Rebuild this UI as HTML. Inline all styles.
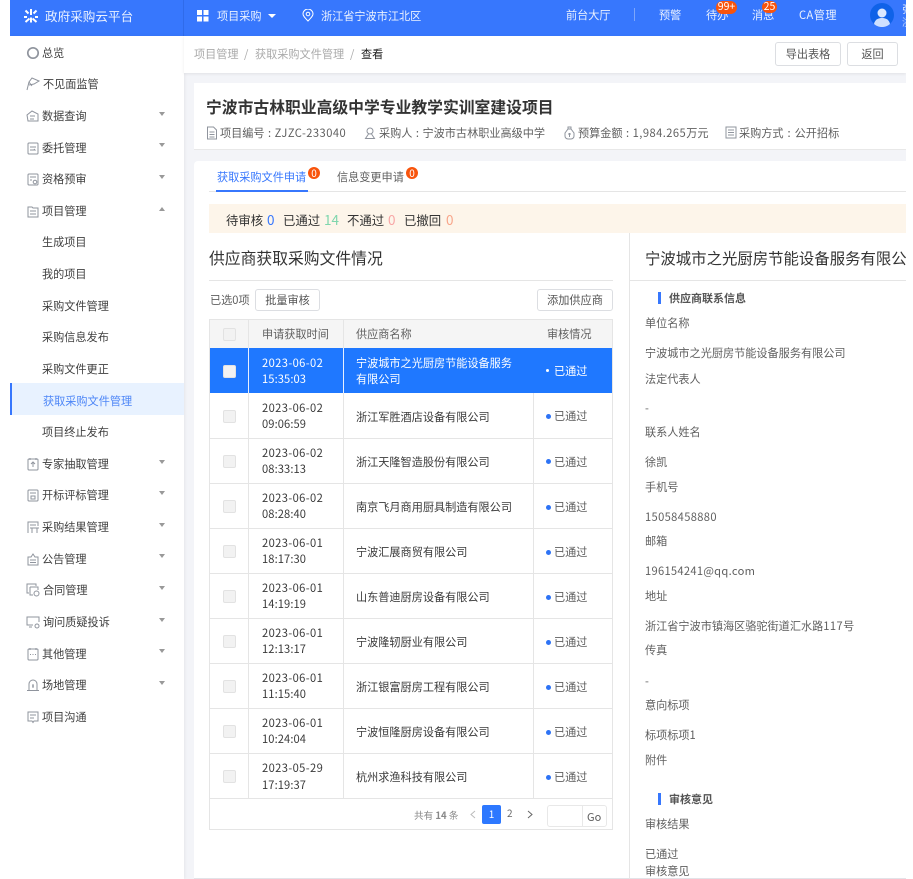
<!DOCTYPE html>
<html lang="zh"><head><meta charset="utf-8"><title>政府采购云平台</title>
<style>
*{box-sizing:border-box}
html,body{margin:0;padding:0;background:#fff}
body{width:913px;height:879px;position:relative;overflow:hidden;font-family:"Noto Sans CJK SC","Liberation Sans",sans-serif;font-size:11.15px;color:#333}
.a{position:absolute;white-space:nowrap}
#root{position:absolute;left:10px;top:0;width:896px;height:879px;background:#f3f4f8;overflow:hidden;filter:blur(.25px)}
#root .a{line-height:16px}
.top{position:absolute;left:0;top:0;width:896px;height:36px;background:#3777fd}
.w{color:#eaf1ff}
.badge{position:absolute;background:#f8540c;color:#fff;border-radius:8px;height:13px;line-height:12px!important;text-align:center;font-size:10.5px}
.side{position:absolute;left:0;top:36px;width:174px;height:843px;background:#fff;box-shadow:1px 0 3px rgba(0,0,0,.06)}
.m{color:#3f3f3f}
.car{position:absolute;width:0;height:0;border-left:3.5px solid transparent;border-right:3.5px solid transparent;border-top:4px solid #999}
.car.u{border-top:0;border-bottom:4px solid #999}
svg.i{position:absolute;width:14px;height:14px;fill:none;stroke:#8f949d;stroke-width:1}
.btn{position:absolute;background:#fff;border:1px solid #dcdee2;border-radius:3px;text-align:center;color:#555;line-height:22px}
.line{position:absolute;background:#e5e5e5}
.d{position:absolute;width:5px;height:5px;border-radius:50%;background:#2d73f5}
.cb{position:absolute;width:13px;height:13px;background:#f2f2f2;border:1px solid #e2e2e2;border-radius:2px}
.g{color:#5f5f5f}
.t{color:#3a3a3a}
.dt{letter-spacing:.4px}
.tm{letter-spacing:.1px}
.n{letter-spacing:.45px}
.c{margin:0 1px}
.s{font-size:13.5px;margin-left:1px}
</style></head><body>
<div id="root">
 <div class="top"></div>
 <div style="position:absolute;left:173px;top:0;width:1px;height:36px;background:#2f6bea"></div>
 <svg style="position:absolute;left:14px;top:9px;width:14px;height:14px" viewBox="0 0 14 14" fill="none" stroke="#fff" stroke-width="2"><path d="M7 0v6M1.500 1.500l3 3M12.500 1.500l-3 3M0 8h3M11 8h3M7 8.500v5M5.500 9.500l-4 3.500M8.500 9.500l4 3.500"/></svg>
 <div class="a w" style="left:35px;top:8px;font-size:12.6px">政府采购云平台</div>
 <svg style="position:absolute;left:187px;top:10px;width:12px;height:12px" viewBox="0 0 12 12" fill="#fff"><rect width="5" height="5"/><rect x="6.500" width="5" height="5"/><rect y="6.500" width="5" height="5"/><rect x="6.500" y="6.500" width="5" height="5"/></svg>
 <div class="a w" style="left:207px;top:8px">项目采购</div>
 <div class="car" style="left:258px;top:14px;border-left-width:4px;border-right-width:4px;border-top:4px solid #fff"></div>
 <svg style="position:absolute;left:292px;top:9px;width:12px;height:13px" viewBox="0 0 12 13" fill="none" stroke="#fff"><path d="M6 12C3 9 1 7 1 5a5 5 0 0 1 10 0c0 2-2 4-5 7z"/><circle cx="6" cy="5" r="1.800"/></svg>
 <div class="a w" style="left:311px;top:8px">浙江省宁波市江北区</div>
 <div class="a w" style="left:556px;top:7px">前台大厅</div>
 <div style="position:absolute;left:624px;top:8px;width:1px;height:13px;background:#7da6fb"></div>
 <div class="a w" style="left:649px;top:7px">预警</div>
 <div class="a w" style="left:696px;top:7px">待办</div>
 <div class="badge" style="left:706px;top:1px;width:21px">99+</div>
 <div class="a w" style="left:742px;top:7px">消息</div>
 <div class="badge" style="left:752px;top:1px;width:15px;height:12px">25</div>
 <div class="a w n" style="left:789px;top:7px">CA管理</div>
 <svg style="position:absolute;left:860px;top:3px;width:24px;height:24px" viewBox="0 0 24 24"><circle cx="12" cy="12" r="12" fill="#0f62e8"/><circle cx="12" cy="10" r="4.500" fill="#dbe8ff"/><path d="M4 21c1-5 5-6 8-6s7 1 8 6a12 12 0 0 1-16 0z" fill="#cfe0ff"/></svg>
 <div class="a w" style="left:892px;top:1px;font-size:10px">张</div>
 <div class="a w" style="left:892px;top:14px;font-size:10px;opacity:.7">浙</div>

 <div class="side"></div>
 <div class="a m" style="left:32px;top:45px">总览</div>
 <svg class="i" style="left:16px;top:46px" viewBox="0 0 14 14"><circle cx="7" cy="7" r="5.200" stroke-width="1.700"/></svg>
 <div class="a m" style="left:33px;top:76px">不见面监管</div>
 <svg class="i" style="left:16px;top:77px" viewBox="0 0 14 14"><path d="M1 13l2-8 3-4 7 3-5 3-5 1M3 5l3 4"/></svg>
 <div class="a m" style="left:32px;top:108px">数据查询</div>
 <svg class="i" style="left:16px;top:109px" viewBox="0 0 14 14"><path d="M1 6l5-4 6 3v7H2zM4 7h5M4 10h4"/></svg>
 <div class="car" style="left:149px;top:112px"></div>
 <div class="a m" style="left:32px;top:140px">委托管理</div>
 <svg class="i" style="left:16px;top:141px" viewBox="0 0 14 14"><rect x="2" y="2" width="10" height="11" rx="1"/><path d="M4 6h6M4 9h5l-1-1"/></svg>
 <div class="car" style="left:149px;top:143px"></div>
 <div class="a m" style="left:32px;top:171px">资格预审</div>
 <svg class="i" style="left:16px;top:172px" viewBox="0 0 14 14"><rect x="2" y="2" width="10" height="11" rx="1"/><path d="M4 5h6M4 8h2"/><circle cx="9" cy="10" r="1.800"/></svg>
 <div class="car" style="left:149px;top:175px"></div>
 <div class="a m" style="left:32px;top:203px">项目管理</div>
 <svg class="i" style="left:16px;top:204px" viewBox="0 0 14 14"><path d="M2 3h4l1 1h5v9H2zM4 7h6M4 10h6"/></svg>
 <div class="car u" style="left:149px;top:207px"></div>
 <div class="a m" style="left:32px;top:234px">生成项目</div>
 <div class="a m" style="left:32px;top:266px">我的项目</div>
 <div class="a m" style="left:32px;top:298px">采购文件管理</div>
 <div class="a m" style="left:32px;top:329px">采购信息发布</div>
 <div class="a m" style="left:32px;top:361px">采购文件更正</div>
 <div style="position:absolute;left:0;top:383px;width:174px;height:32px;background:#e8f2ff;border-left:2px solid #3777fd"></div>
 <div class="a" style="left:33px;top:393px;color:#4d86f7">获取采购文件管理</div>
 <div class="a m" style="left:32px;top:424px">项目终止发布</div>
 <div class="a m" style="left:32px;top:456px">专家抽取管理</div>
 <svg class="i" style="left:16px;top:457px" viewBox="0 0 14 14"><rect x="2" y="2" width="10" height="11" rx="1"/><path d="M7 10V5M5 7l2-2 2 2M4 1v2M10 1v2"/></svg>
 <div class="car" style="left:149px;top:460px"></div>
 <div class="a m" style="left:32px;top:487px">开标评标管理</div>
 <svg class="i" style="left:16px;top:488px" viewBox="0 0 14 14"><rect x="2" y="2" width="10" height="11" rx="1"/><path d="M4 5h6M5 8h4v3H5z"/></svg>
 <div class="car" style="left:149px;top:491px"></div>
 <div class="a m" style="left:32px;top:519px">采购结果管理</div>
 <svg class="i" style="left:16px;top:520px" viewBox="0 0 14 14"><path d="M2 13V2h10v4M4 5h6M4 8h9M6 8v5M11 8v5"/></svg>
 <div class="car" style="left:149px;top:523px"></div>
 <div class="a m" style="left:32px;top:551px">公告管理</div>
 <svg class="i" style="left:16px;top:552px" viewBox="0 0 14 14"><path d="M2 13V5h3l2-3 2 3h3v8zM4 8h6M4 10.500h6"/></svg>
 <div class="car" style="left:149px;top:554px"></div>
 <div class="a m" style="left:33px;top:582px">合同管理</div>
 <svg class="i" style="left:16px;top:583px" viewBox="0 0 14 14"><path d="M3 10H1V1h9v2M4 4h8v3M4 4v8h3"/><circle cx="10.500" cy="10.500" r="2.500"/></svg>
 <div class="car" style="left:149px;top:586px"></div>
 <div class="a m" style="left:33px;top:614px">询问质疑投诉</div>
 <svg class="i" style="left:16px;top:615px" viewBox="0 0 14 14"><path d="M7 10H1V2h12v5M3 12h3"/><circle cx="11" cy="11" r="2"/></svg>
 <div class="car" style="left:149px;top:618px"></div>
 <div class="a m" style="left:32px;top:646px">其他管理</div>
 <svg class="i" style="left:16px;top:647px" viewBox="0 0 14 14"><rect x="2" y="2" width="10" height="11" rx="1"/><path d="M4 7.500h1M6.500 7.500h1M9 7.500h1M4 1v2M10 1v2"/></svg>
 <div class="car" style="left:149px;top:649px"></div>
 <div class="a m" style="left:32px;top:677px">场地管理</div>
 <svg class="i" style="left:16px;top:678px" viewBox="0 0 14 14"><path d="M3 12V6a4 4 0 0 1 8 0v6M1 12.500h12M7 6v4M6 8h2"/></svg>
 <div class="car" style="left:149px;top:681px"></div>
 <div class="a m" style="left:32px;top:709px">项目沟通</div>
 <svg class="i" style="left:16px;top:710px" viewBox="0 0 14 14"><path d="M2 2h10v9H8l-1 1.500L6 11H2zM4 5h6M4 8h4"/></svg>

 <div style="position:absolute;left:174px;top:36px;width:722px;height:37px;background:#fff;box-shadow:0 1px 3px rgba(0,0,0,.08)"></div>
 <div class="a" style="left:184px;top:46px;color:#aaa">项目管理</div>
 <div class="a" style="left:234px;top:46px;color:#aaa">/</div>
 <div class="a" style="left:245px;top:46px;color:#aaa">获取采购文件管理</div>
 <div class="a" style="left:340px;top:46px;color:#aaa">/</div>
 <div class="a" style="left:351px;top:46px;color:#222">查看</div>
 <div class="btn" style="left:765px;top:42px;width:66px;height:24px">导出表格</div>
 <div class="btn" style="left:837px;top:42px;width:51px;height:24px">返回</div>

 <div style="position:absolute;left:184px;top:83px;width:712px;height:67px;background:#fff;border-bottom:1px solid #e8e8e8"></div>
 <div class="a" style="left:196px;top:97px;font-size:15.8px;font-weight:bold;color:#333;line-height:20px">宁波市古林职业高级中学专业教学实训室建设项目</div>
 <svg class="i" style="left:196px;top:126px;width:12px;height:14px" viewBox="0 0 12 14"><path d="M1.500 1h6l3 3v9h-9zM3.500 6h5M3.500 8.500h5M3.500 11h5"/></svg>
 <div class="a g" style="left:210px;top:125px">项目编号<span class="c"> : </span><span class="n">ZJZC-233040</span></div>
 <svg class="i" style="left:354px;top:126px;width:12px;height:14px" viewBox="0 0 12 14"><circle cx="6" cy="5" r="3"/><path d="M4.500 8L1.500 12.500h9L7.500 8"/></svg>
 <div class="a g" style="left:369px;top:125px">采购人<span class="c"> : </span>宁波市古林职业高级中学</div>
 <svg class="i" style="left:553px;top:126px;width:13px;height:14px" viewBox="0 0 13 14"><path d="M5 3h3l3 4v3a3 3 0 0 1-3 3H5a3 3 0 0 1-3-3V7zM5 1h3v2H5zM5 8h3M6.500 7v4"/></svg>
 <div class="a g" style="left:568px;top:125px">预算金额<span class="c"> : </span><span class="n">1,984.265</span>万元</div>
 <svg class="i" style="left:715px;top:126px;width:12px;height:13px" viewBox="0 0 12 13"><rect x="1" y="1" width="10" height="11"/><path d="M3 4h6M3 6.500h6M3 9h6"/></svg>
 <div class="a g" style="left:729px;top:125px">采购方式<span class="c" style="margin:0 1.500px"> : </span>公开招标</div>

 <div style="position:absolute;left:184px;top:161px;width:712px;height:718px;background:#fff;border-radius:4px 0 0 0;border-bottom:1px solid #e2e3e8"></div>
 <div class="a" style="left:207px;top:169px;color:#3777fd">获取采购文件申请</div>
 <div class="badge" style="left:298px;top:167px;width:12px;height:12px;border-radius:7px;font-size:10px">0</div>
 <div class="a g" style="left:327px;top:169px">信息变更申请</div>
 <div class="badge" style="left:396px;top:167px;width:12px;height:12px;border-radius:7px;font-size:10px">0</div>
 <div class="line" style="left:199px;top:191px;width:697px;height:1px"></div>
 <div style="position:absolute;left:206px;top:190px;width:92px;height:2px;background:#3777fd"></div>
 <div style="position:absolute;left:199px;top:204px;width:697px;height:29px;background:#fdf5ea"></div>
 <div class="a" style="left:216px;top:211px;font-size:12.4px;color:#333">待审核 <span class="s" style="color:#3777fd">0</span></div>
 <div class="a" style="left:273px;top:211px;font-size:12.4px;color:#333">已通过 <span class="s" style="color:#7fd6ad">14</span></div>
 <div class="a" style="left:337px;top:211px;font-size:12.4px;color:#333">不通过 <span class="s" style="color:#f8a6a6">0</span></div>
 <div class="a" style="left:394px;top:211px;font-size:12.4px;color:#333">已撤回 <span class="s" style="color:#f8a58a;margin-left:2px">0</span></div>
 <div class="line" style="left:619px;top:233px;width:1px;height:646px"></div>

 <div class="a" style="left:199px;top:249px;font-size:15.8px;color:#333;line-height:18px">供应商获取采购文件情况</div>
 <div class="line" style="left:199px;top:280px;width:404px;height:1px"></div>
 <div class="a g" style="left:200px;top:292px">已选0项</div>
 <div class="btn" style="left:245px;top:289px;width:65px;height:22px;line-height:20px">批量审核</div>
 <div class="btn" style="left:527px;top:289px;width:76px;height:22px;line-height:20px">添加供应商</div>

 <div style="position:absolute;left:199px;top:319px;width:404px;height:30px;background:#f5f5f5"></div>
 <div style="position:absolute;left:199px;top:348px;width:404px;height:45px;background:#1f78ff"></div>
 <div style="position:absolute;left:199px;top:319px;width:404px;height:511px;border:1px solid #e5e5e5"></div>
 <div class="line" style="left:238px;top:319px;width:1px;height:480px"></div>
 <div class="line" style="left:333px;top:319px;width:1px;height:480px"></div>
 <div style="position:absolute;left:238px;top:348px;width:1px;height:45px;background:#e8f0ff"></div>
 <div style="position:absolute;left:333px;top:348px;width:1px;height:45px;background:#e8f0ff"></div>
 <div class="line" style="left:523px;top:393px;width:1px;height:406px"></div>
 <div class="line" style="left:199px;top:438px;width:404px;height:1px"></div>
 <div class="line" style="left:199px;top:483px;width:404px;height:1px"></div>
 <div class="line" style="left:199px;top:528px;width:404px;height:1px"></div>
 <div class="line" style="left:199px;top:573px;width:404px;height:1px"></div>
 <div class="line" style="left:199px;top:618px;width:404px;height:1px"></div>
 <div class="line" style="left:199px;top:663px;width:404px;height:1px"></div>
 <div class="line" style="left:199px;top:708px;width:404px;height:1px"></div>
 <div class="line" style="left:199px;top:753px;width:404px;height:1px"></div>
 <div class="line" style="left:199px;top:798px;width:404px;height:1px"></div>

 <div class="cb" style="left:213px;top:328px"></div>
 <div class="a g" style="left:252px;top:326px">申请获取时间</div>
 <div class="a g" style="left:346px;top:326px">供应商名称</div>
 <div class="a g" style="left:537px;top:326px">审核情况</div>

 <div class="cb" style="left:213px;top:365px"></div>
 <div class="a dt" style="left:252px;top:355px;color:#fff">2023-06-02</div>
 <div class="a tm" style="left:252px;top:371px;color:#fff">15:35:03</div>
 <div class="a" style="left:346px;top:355px;color:#fff">宁波城市之光厨房节能设备服务</div>
 <div class="a" style="left:346px;top:371px;color:#fff">有限公司</div>
 <div class="d" style="left:536px;top:369px;width:3px;height:3px;background:#fff"></div>
 <div class="a" style="left:544px;top:363px;color:#fff">已通过</div>

 <div class="cb" style="left:213px;top:410px"></div>
 <div class="a t dt" style="left:252px;top:400px">2023-06-02</div><div class="a t tm" style="left:252px;top:416px">09:06:59</div>
 <div class="a t" style="left:346px;top:409px">浙江军胜酒店设备有限公司</div>
 <div class="d" style="left:536px;top:414px"></div><div class="a g" style="left:544px;top:408px">已通过</div>

 <div class="cb" style="left:213px;top:455px"></div>
 <div class="a t dt" style="left:252px;top:445px">2023-06-02</div><div class="a t tm" style="left:252px;top:461px">08:33:13</div>
 <div class="a t" style="left:346px;top:454px">浙江天隆智造股份有限公司</div>
 <div class="d" style="left:536px;top:459px"></div><div class="a g" style="left:544px;top:454px">已通过</div>

 <div class="cb" style="left:213px;top:500px"></div>
 <div class="a t dt" style="left:252px;top:490px">2023-06-02</div><div class="a t tm" style="left:252px;top:506px">08:28:40</div>
 <div class="a t" style="left:346px;top:499px">南京飞月商用厨具制造有限公司</div>
 <div class="d" style="left:536px;top:505px"></div><div class="a g" style="left:544px;top:499px">已通过</div>

 <div class="cb" style="left:213px;top:545px"></div>
 <div class="a t dt" style="left:252px;top:535px">2023-06-01</div><div class="a t tm" style="left:252px;top:551px">18:17:30</div>
 <div class="a t" style="left:346px;top:544px">宁波汇展商贸有限公司</div>
 <div class="d" style="left:536px;top:550px"></div><div class="a g" style="left:544px;top:544px">已通过</div>

 <div class="cb" style="left:213px;top:590px"></div>
 <div class="a t dt" style="left:252px;top:580px">2023-06-01</div><div class="a t tm" style="left:252px;top:596px">14:19:19</div>
 <div class="a t" style="left:346px;top:589px">山东普迪厨房设备有限公司</div>
 <div class="d" style="left:536px;top:595px"></div><div class="a g" style="left:544px;top:589px">已通过</div>

 <div class="cb" style="left:213px;top:635px"></div>
 <div class="a t dt" style="left:252px;top:625px">2023-06-01</div><div class="a t tm" style="left:252px;top:641px">12:13:17</div>
 <div class="a t" style="left:346px;top:634px">宁波隆轫厨业有限公司</div>
 <div class="d" style="left:536px;top:640px"></div><div class="a g" style="left:544px;top:634px">已通过</div>

 <div class="cb" style="left:213px;top:680px"></div>
 <div class="a t dt" style="left:252px;top:670px">2023-06-01</div><div class="a t tm" style="left:252px;top:686px">11:15:40</div>
 <div class="a t" style="left:346px;top:679px">浙江银富厨房工程有限公司</div>
 <div class="d" style="left:536px;top:685px"></div><div class="a g" style="left:544px;top:679px">已通过</div>

 <div class="cb" style="left:213px;top:725px"></div>
 <div class="a t dt" style="left:252px;top:715px">2023-06-01</div><div class="a t tm" style="left:252px;top:731px">10:24:04</div>
 <div class="a t" style="left:346px;top:724px">宁波恒隆厨房设备有限公司</div>
 <div class="d" style="left:536px;top:730px"></div><div class="a g" style="left:544px;top:724px">已通过</div>

 <div class="cb" style="left:213px;top:770px"></div>
 <div class="a t dt" style="left:252px;top:760px">2023-05-29</div><div class="a t tm" style="left:252px;top:777px">17:19:37</div>
 <div class="a t" style="left:346px;top:769px">杭州求渔科技有限公司</div>
 <div class="d" style="left:536px;top:775px"></div><div class="a g" style="left:544px;top:769px">已通过</div>

 <div class="a" style="left:404px;top:807px;font-size:9.6px;color:#888">共有 <b>14</b> 条</div>
 <svg style="position:absolute;left:459px;top:810px;width:8px;height:9px" viewBox="0 0 8 9" fill="none" stroke="#bbb"><path d="M6 1L2 4.500 6 8"/></svg>
 <div style="position:absolute;left:472px;top:805px;width:19px;height:19px;background:#2d78ff;border-radius:2px;color:#fff;font-size:10px;line-height:18px;text-align:center">1</div>
 <div class="a" style="left:497px;top:805px;font-size:10px;color:#666">2</div>
 <svg style="position:absolute;left:516px;top:810px;width:8px;height:9px" viewBox="0 0 8 9" fill="none" stroke="#666"><path d="M2 1l4 3.500L2 8"/></svg>
 <div style="position:absolute;left:537px;top:805px;width:60px;height:22px;border:1px solid #e8e8e8;border-radius:3px"></div>
 <div style="position:absolute;left:572px;top:806px;width:1px;height:20px;background:#e8e8e8"></div>
 <div class="a g" style="left:577px;top:809px;font-size:11px">Go</div>

 <div class="a" style="left:635px;top:248px;font-size:15.4px;color:#333;line-height:20px">宁波城市之光厨房节能设备服务有限公司</div>
 <div class="line" style="left:620px;top:280px;width:276px;height:1px"></div>
 <div style="position:absolute;left:648px;top:292px;width:3px;height:12px;background:#3777fd"></div>
 <div class="a" style="left:659px;top:290px;font-size:11px;font-weight:bold;color:#555">供应商联系信息</div>
 <div class="a g" style="left:635px;top:315px">单位名称</div>
 <div class="a g" style="left:635px;top:345px">宁波城市之光厨房节能设备服务有限公司</div>
 <div class="a g" style="left:635px;top:371px">法定代表人</div>
 <div class="a g" style="left:635px;top:400px">-</div>
 <div class="a g" style="left:635px;top:424px">联系人姓名</div>
 <div class="a g" style="left:635px;top:454px">徐凯</div>
 <div class="a g" style="left:635px;top:479px">手机号</div>
 <div class="a g" style="left:635px;top:509px;letter-spacing:.35px">15058458880</div>
 <div class="a g" style="left:635px;top:533px">邮箱</div>
 <div class="a g" style="left:635px;top:563px;letter-spacing:.3px">196154241@qq.com</div>
 <div class="a g" style="left:635px;top:588px">地址</div>
 <div class="a g" style="left:635px;top:618px">浙江省宁波市镇海区骆驼街道汇水路<span class="n">117</span>号</div>
 <div class="a g" style="left:635px;top:642px">传真</div>
 <div class="a g" style="left:635px;top:673px">-</div>
 <div class="a g" style="left:635px;top:697px">意向标项</div>
 <div class="a g" style="left:635px;top:727px">标项标项1</div>
 <div class="a g" style="left:635px;top:752px">附件</div>
 <div style="position:absolute;left:648px;top:793px;width:3px;height:12px;background:#3777fd"></div>
 <div class="a" style="left:659px;top:791px;font-size:11px;font-weight:bold;color:#555">审核意见</div>
 <div class="a g" style="left:635px;top:816px">审核结果</div>
 <div class="a g" style="left:635px;top:846px">已通过</div>
 <div class="a g" style="left:635px;top:863px">审核意见</div>
</div>
</body></html>
